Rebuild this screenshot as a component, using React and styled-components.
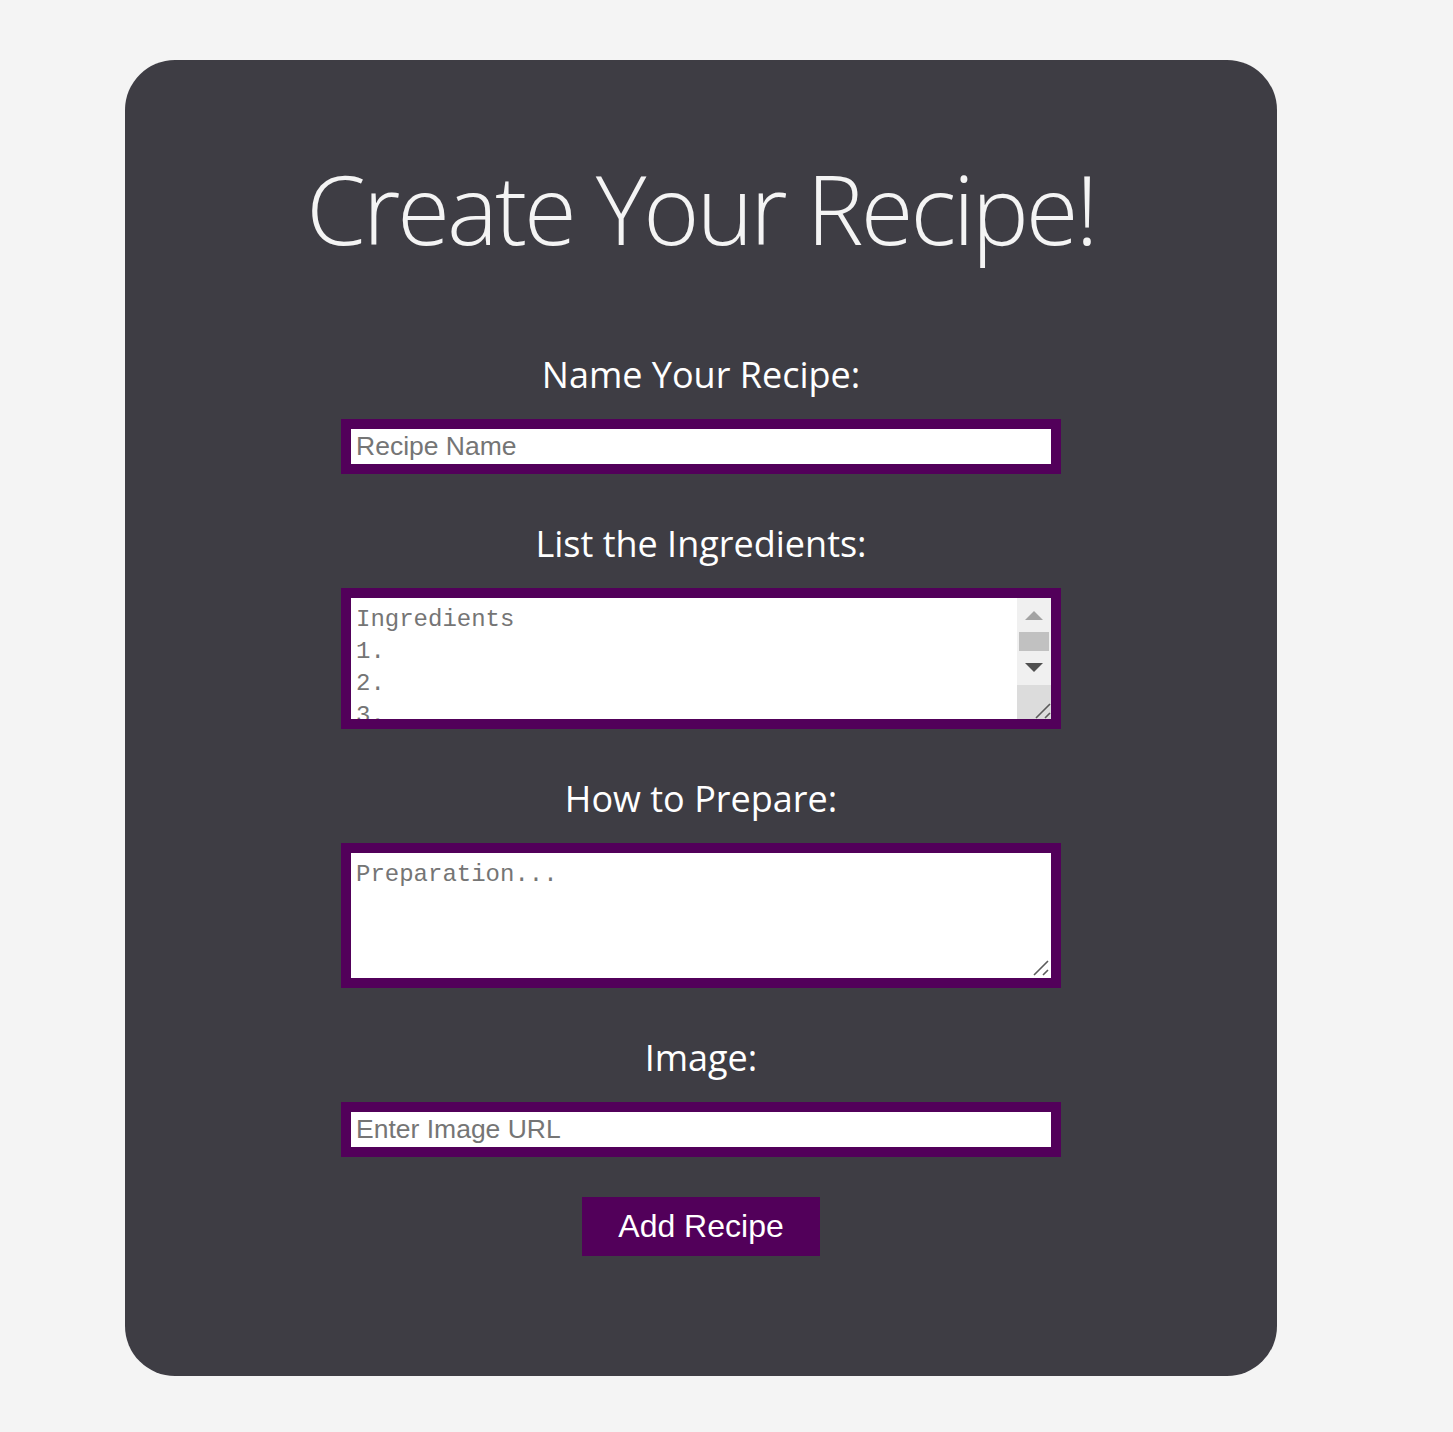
import styled, { createGlobalStyle } from 'styled-components';

const purple = '#52005a';

const GlobalStyle = createGlobalStyle`
	body {
		margin: 0;
		background: #f4f4f4;
		font-family: "Open Sans", "Noto Sans", sans-serif;
	}
`;

const Page = styled.div`
	padding: 60px 0 56px 125px;
`;

const Card = styled.form`
	width: 1152px;
	box-sizing: border-box;
	background: #3e3d44;
	border-radius: 50px;
	padding: 82px 0 120px;
	display: flex;
	flex-direction: column;
	align-items: center;
	color: #fff;
`;

const Title = styled.h1`
	margin: 0 0 77px;
	font-size: 96px;
	font-weight: 300;
	letter-spacing: -3px;
	line-height: normal;
	color: #f4f4f4;
`;

const Label = styled.label`
	display: block;
	font-size: 36px;
	line-height: normal;
	margin: ${({ $first }) => ($first ? '0' : '45px')} 0 20px;
`;

const Frame = styled.div`
	position: relative;
	width: 62.5%;
	box-sizing: border-box;
	border: 10px solid ${purple};
	background: #fff;
	display: flex;
`;

const TextInput = styled.input`
	flex: 1;
	height: 35px;
	box-sizing: border-box;
	border: none;
	outline: none;
	padding: 0 5px;
	font-family: "Liberation Sans", Arial, sans-serif;
	font-size: 26.5px;
	color: #222;
	&::placeholder {
		color: #757575;
	}
`;

const TextArea = styled.textarea`
	flex: 1;
	height: ${({ $h }) => $h}px;
	box-sizing: border-box;
	border: none;
	outline: none;
	resize: none;
	overflow: hidden;
	padding: 6px 5px;
	font-family: "Liberation Mono", "DejaVu Sans Mono", monospace;
	font-size: 24px;
	line-height: 32px;
	&::placeholder {
		color: #757575;
	}
`;

const Rail = styled.div`
	width: 34px;
	display: flex;
	flex-direction: column;
	background: #f0f0f0;
`;

const ArrowCell = styled.div`
	height: 34px;
	display: flex;
	align-items: center;
	justify-content: center;
`;

const Thumb = styled.div`
	height: 19px;
	margin: 0 2px;
	background: #c1c1c1;
`;

const Corner = styled.div`
	margin-top: auto;
	height: 34px;
	background: #dcdcdc;
	display: flex;
	align-items: flex-end;
	justify-content: flex-end;
`;

const GripSpot = styled.div`
	position: absolute;
	right: 2px;
	bottom: 2px;
	line-height: 0;
`;

const Button = styled.button`
	margin-top: 40px;
	width: 238px;
	height: 59px;
	border: none;
	background: ${purple};
	color: #fff;
	font-family: "Liberation Sans", Arial, sans-serif;
	font-size: 32px;
	cursor: pointer;
`;

const Grip = () => (
	<svg width="16" height="16" viewBox="0 0 16 16">
		<path d="M1 15 L15 1 M10 15 L15 10" stroke="#5b5b5b" strokeWidth="1.6" />
	</svg>
);

const Arrow = ({ up, color }) => (
	<svg width="18" height="10" viewBox="0 0 18 10">
		<path d={up ? 'M0 10 L9 1 L18 10 Z' : 'M0 0 L18 0 L9 9 Z'} fill={color} />
	</svg>
);

const ScrollRail = () => (
	<Rail>
		<ArrowCell>
			<Arrow up color="#a3a3a3" />
		</ArrowCell>
		<Thumb />
		<ArrowCell>
			<Arrow color="#505050" />
		</ArrowCell>
		<Corner>
			<Grip />
		</Corner>
	</Rail>
);

export default function App() {
	return (
		<>
			<GlobalStyle />
			<Page>
				<Card onSubmit={(e) => e.preventDefault()}>
					<Title>Create Your Recipe!</Title>

					<Label $first htmlFor="name">Name Your Recipe:</Label>
					<Frame>
						<TextInput id="name" placeholder="Recipe Name" />
					</Frame>

					<Label htmlFor="ingredients">List the Ingredients:</Label>
					<Frame>
						<TextArea
							id="ingredients"
							$h={121}
							placeholder={'Ingredients\n1.\n2.\n3.\n4.\n5.'}
						/>
						<ScrollRail />
					</Frame>

					<Label htmlFor="prep">How to Prepare:</Label>
					<Frame>
						<TextArea id="prep" $h={125} placeholder="Preparation..." />
						<GripSpot>
							<Grip />
						</GripSpot>
					</Frame>

					<Label htmlFor="image">Image:</Label>
					<Frame>
						<TextInput id="image" placeholder="Enter Image URL" />
					</Frame>

					<Button type="submit">Add Recipe</Button>
				</Card>
			</Page>
		</>
	);
}
